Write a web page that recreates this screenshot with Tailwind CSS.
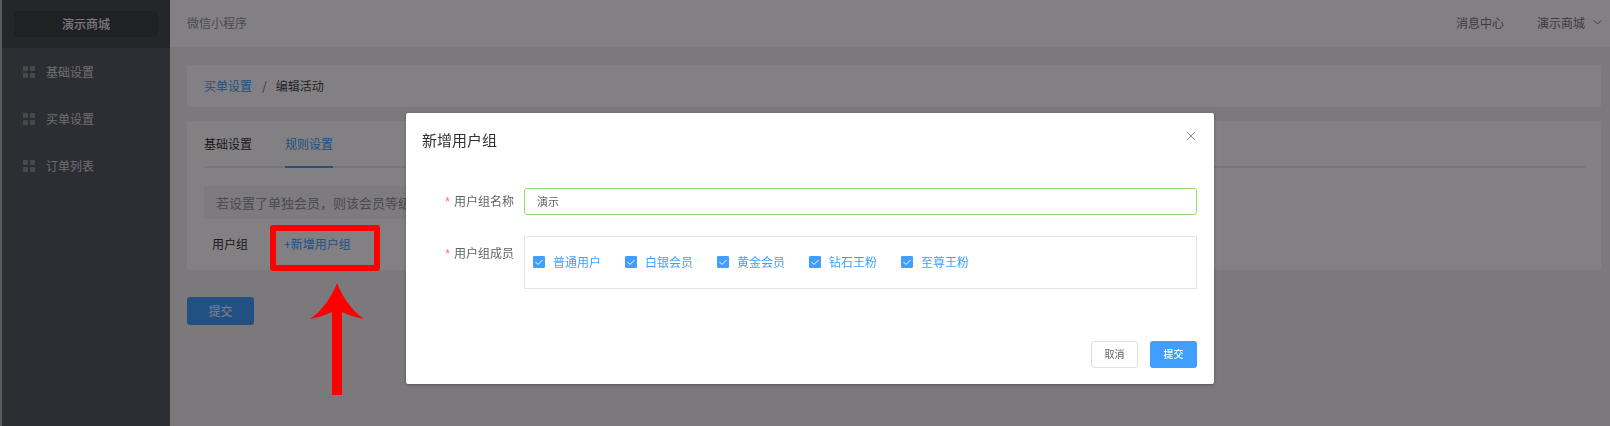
<!DOCTYPE html>
<html lang="zh-CN">
<head>
    <meta charset="UTF-8">
    <meta name="viewport" content="width=device-width, initial-scale=1.0">
    <script src="https://cdn.jsdelivr.net/npm/@tailwindcss/browser@4"></script>
    <title>演示商城</title>
</head>
<body class="font-['Noto_Sans_CJK_SC',sans-serif] text-[12px] leading-[18px] text-[#303133] bg-[#f1f1f0]">
    <svg class="hidden">
        <symbol id="grid" viewBox="0 0 12 12">
            <rect x="0" y="0" width="5" height="5" rx="1"/>
            <rect x="7" y="0" width="5" height="5" rx="1"/>
            <rect x="0" y="7" width="5" height="5" rx="1"/>
            <rect x="7" y="7" width="5" height="5" rx="1"/>
        </symbol>
    </svg>

    <div class="flex min-h-screen">
        <!-- sidebar -->
        <aside class="w-[170px] shrink-0 bg-[#535b60] border-l-2 border-[#b1b1b1]">
            <div class="h-12 bg-[#454b4e] px-3 flex items-center">
                <h1 class="w-full h-[26px] rounded bg-[#3b4144] text-[#eeeeee] font-medium flex items-center justify-center">演示商城</h1>
            </div>
            <nav class="flex flex-col text-[#d8d8d8]">
                <a href="#" class="h-[47px] pl-[21px] flex items-center gap-[11px]">
                    <svg class="w-3 h-3 fill-[#8d9095]"><use href="#grid"/></svg>基础设置
                </a>
                <a href="#" class="h-[47px] pl-[21px] flex items-center gap-[11px]">
                    <svg class="w-3 h-3 fill-[#8d9095]"><use href="#grid"/></svg>买单设置
                </a>
                <a href="#" class="h-[47px] pl-[21px] flex items-center gap-[11px]">
                    <svg class="w-3 h-3 fill-[#8d9095]"><use href="#grid"/></svg>订单列表
                </a>
            </nav>
        </aside>

        <div class="flex-1 min-w-0">
            <header class="h-[47px] bg-white flex items-center justify-between pl-[17px] pr-2 pb-[2px]">
                <span class="text-[#909399]">微信小程序</span>
                <div class="flex items-center gap-[33px] text-[#74757b]">
                    <a href="#">消息中心</a>
                    <button type="button" class="flex items-center gap-2">演示商城
                        <svg class="w-[9px] h-[9px]" viewBox="0 0 9 9" fill="none" stroke="currentColor"><path d="M1 2.5l3.5 3.5L8 2.5"/></svg>
                    </button>
                </div>
            </header>

            <main class="pt-[18px] pl-[17px] pr-[9px]">
                <nav class="h-[42px] bg-white px-[17px] flex items-center gap-[10px] rounded-xs">
                    <a href="#" class="text-[#409eff]">买单设置</a>
                    <span class="text-[#707278]">/</span>
                    <span class="text-[#45474c] -ml-px">编辑活动</span>
                </nav>

                <section class="mt-[14px] bg-white pl-[17px] pr-4 pt-[14px] pb-[17px] rounded-xs">
                    <div class="flex gap-[33px] border-b-2 border-[#e9e9ec]">
                        <button type="button" class="pb-[13px]">基础设置</button>
                        <button type="button" class="-mb-[2px] pb-[13px] border-b-2 border-[#409eff] text-[#409eff]">规则设置</button>
                    </div>
                    <p class="mt-[18px] w-1/2 h-[33px] px-3 bg-[#f4f4f5] text-[13px] text-[#909399] flex items-center rounded-xs">若设置了单独会员，则该会员等级</p>
                    <div class="mt-4 px-2 flex items-center gap-9">
                        <span>用户组</span>
                        <button type="button" class="text-[#409eff]">+新增用户组</button>
                    </div>
                </section>

                <button type="button" class="mt-[27px] w-[67px] h-7 rounded-[3px] bg-[#409eff] text-white">提交</button>
            </main>
        </div>
    </div>

    <!-- dialog -->
    <div class="fixed inset-0 bg-[#050106]/50 flex items-start justify-center pl-[10px] pt-[113px]">
        <form role="dialog" aria-labelledby="dialog-title" class="w-[808px] max-w-full bg-white rounded-xs shadow-[0_1px_3px_rgba(0,0,0,0.3)] pl-4 pr-[17px] pt-[17px] pb-4 text-[#606266]">
            <div class="flex justify-between items-start">
                <h2 id="dialog-title" class="text-[15px] leading-5 text-[#303133]">新增用户组</h2>
                <button type="button" aria-label="关闭" class="text-[#909399]">
                    <svg class="w-3 h-3" viewBox="0 0 12 12" fill="none" stroke="currentColor"><path d="M2 2l8 8M10 2l-8 8"/></svg>
                </button>
            </div>

            <div class="mt-[38px] flex">
                <label for="group-name" class="w-[102px] pr-[10px] shrink-0 text-right leading-[25px]"><span class="font-['Liberation_Sans'] text-[#f56c6c] mr-1">*</span>用户组名称</label>
                <input id="group-name" type="text" value="演示" class="flex-1 min-w-0 h-[27px] px-3 pb-[2px] rounded-[3px] border border-[#95db74] text-[11px] outline-none">
            </div>

            <fieldset class="mt-[21px] flex" aria-labelledby="members-label">
                <span id="members-label" class="w-[102px] pr-[10px] shrink-0 text-right leading-[33px]"><span class="font-['Liberation_Sans'] text-[#f56c6c] mr-1">*</span>用户组成员</span>
                <div class="flex-1 h-[53px] px-2 pb-px border border-[#e4e5e9] flex items-center gap-6 text-[#409eff]">
                    <label class="flex items-center gap-2">
                        <span class="relative flex">
                            <input type="checkbox" checked class="peer appearance-none w-3 h-3 rounded-[1px] border border-[#409eff] checked:bg-[#409eff]">
                            <svg class="absolute inset-0 w-3 h-3 pointer-events-none hidden peer-checked:block" viewBox="0 0 12 12" fill="none" stroke="white"><path d="M2.5 6l2.5 2.5L9.5 4"/></svg>
                        </span>普通用户
                    </label>
                    <label class="flex items-center gap-2">
                        <span class="relative flex">
                            <input type="checkbox" checked class="peer appearance-none w-3 h-3 rounded-[1px] border border-[#409eff] checked:bg-[#409eff]">
                            <svg class="absolute inset-0 w-3 h-3 pointer-events-none hidden peer-checked:block" viewBox="0 0 12 12" fill="none" stroke="white"><path d="M2.5 6l2.5 2.5L9.5 4"/></svg>
                        </span>白银会员
                    </label>
                    <label class="flex items-center gap-2">
                        <span class="relative flex">
                            <input type="checkbox" checked class="peer appearance-none w-3 h-3 rounded-[1px] border border-[#409eff] checked:bg-[#409eff]">
                            <svg class="absolute inset-0 w-3 h-3 pointer-events-none hidden peer-checked:block" viewBox="0 0 12 12" fill="none" stroke="white"><path d="M2.5 6l2.5 2.5L9.5 4"/></svg>
                        </span>黄金会员
                    </label>
                    <label class="flex items-center gap-2">
                        <span class="relative flex">
                            <input type="checkbox" checked class="peer appearance-none w-3 h-3 rounded-[1px] border border-[#409eff] checked:bg-[#409eff]">
                            <svg class="absolute inset-0 w-3 h-3 pointer-events-none hidden peer-checked:block" viewBox="0 0 12 12" fill="none" stroke="white"><path d="M2.5 6l2.5 2.5L9.5 4"/></svg>
                        </span>钻石王粉
                    </label>
                    <label class="flex items-center gap-2">
                        <span class="relative flex">
                            <input type="checkbox" checked class="peer appearance-none w-3 h-3 rounded-[1px] border border-[#409eff] checked:bg-[#409eff]">
                            <svg class="absolute inset-0 w-3 h-3 pointer-events-none hidden peer-checked:block" viewBox="0 0 12 12" fill="none" stroke="white"><path d="M2.5 6l2.5 2.5L9.5 4"/></svg>
                        </span>至尊王粉
                    </label>
                </div>
            </fieldset>

            <div class="mt-[52px] flex justify-end gap-3 text-[10px]">
                <button type="button" class="w-[47px] h-[27px] pb-px rounded-[3px] border border-[#dcdfe6] bg-white">取消</button>
                <button type="submit" class="w-[47px] h-[27px] pb-px rounded-[3px] bg-[#409eff] text-white font-medium">提交</button>
            </div>
        </form>
    </div>

    <!-- highlight and arrow on top of the mask -->
    <div class="absolute left-[270px] top-[225px] w-[110px] h-[46px] border-6 border-[#ff0000] rounded-[3px] pointer-events-none"></div>
    <svg class="absolute left-[310px] top-[283px] w-[54px] h-[112px] fill-[#ff0000] pointer-events-none" viewBox="0 0 54 112">
        <path d="M27 0C32 13 41 27 54 36C45 34 38 32 32 29V112H22V29C16 32 9 34 0 36C13 27 22 13 27 0Z"/>
    </svg>
</body>
</html>
